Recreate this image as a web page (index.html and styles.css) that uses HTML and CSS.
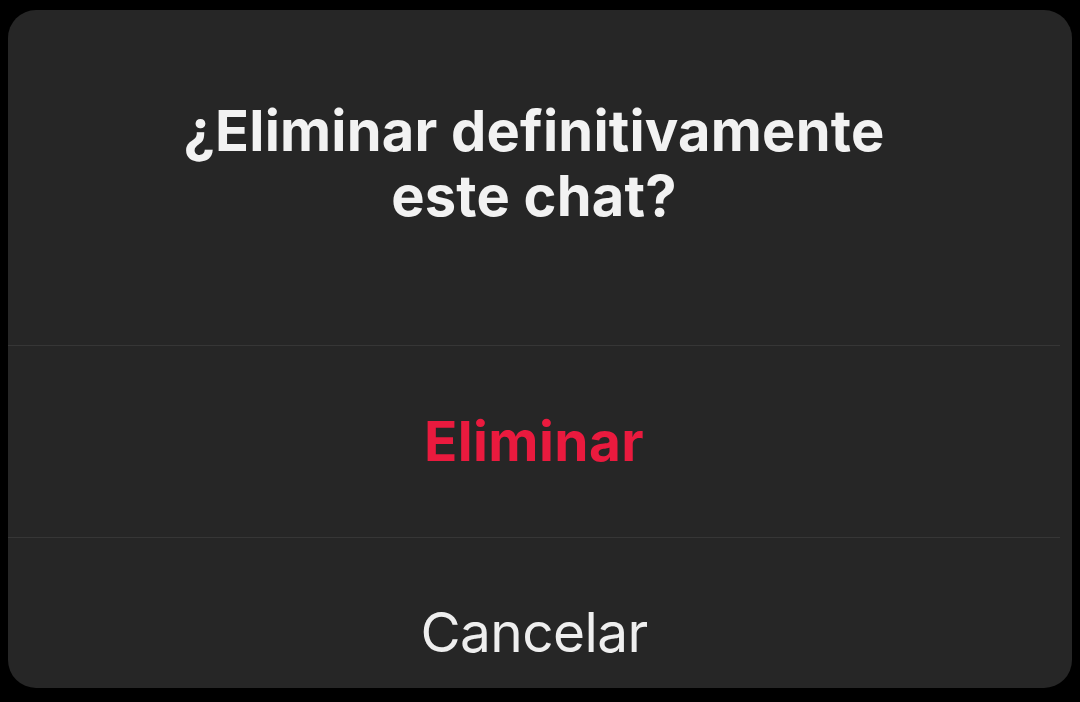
FILE: index.html
```html
<!DOCTYPE html>
<html lang="es">
<head>
    <meta charset="UTF-8">
    <meta name="viewport" content="width=device-width, initial-scale=1.0">
    <title>Eliminar chat</title>
    <link rel="stylesheet" href="styles.css">
</head>
<body>
    <div class="dialog">
        <div class="dialog-title">
            <h1>¿Eliminar definitivamente<br>este chat?</h1>
        </div>
        <button class="dialog-btn danger">Eliminar</button>
        <button class="dialog-btn cancel">Cancelar</button>
    </div>
</body>
</html>
```

FILE: styles.css
```css
body {
    margin: 0;
    background-color: #000;
    font-family: Inter, Roboto, "Liberation Sans", sans-serif;
    font-variant-ligatures: none;
    height: 702px;
    overflow: hidden;
}
.dialog {
    margin: 10px 8px 0;
    height: 678px;
    background-color: #262626;
    border-radius: 28px;
    display: flex;
    flex-direction: column;
    padding-right: 12px;
}
.dialog-title {
    height: 335px;
    box-sizing: border-box;
    padding-top: 89px;
    text-align: center;
}
.dialog-title h1 {
    margin: 0;
    color: #f2f2f2;
    font-size: 56px;
    line-height: 65px;
    font-weight: 700;
    letter-spacing: 0.2px;
}
.dialog-btn {
    display: block;
    width: 100%;
    background: none;
    border: none;
    border-top: 1px solid #363636;
    font-family: inherit;
    font-size: 55px;
    line-height: 1;
    text-align: center;
    cursor: pointer;
}
.danger {
    height: 192px;
    color: #ea1a3e;
    font-weight: 700;
    letter-spacing: 0.4px;
}
.cancel {
    flex: 1;
    color: #eeeeee;
    font-weight: 400;
    padding-top: 40px;
    letter-spacing: -0.6px;
}
```
